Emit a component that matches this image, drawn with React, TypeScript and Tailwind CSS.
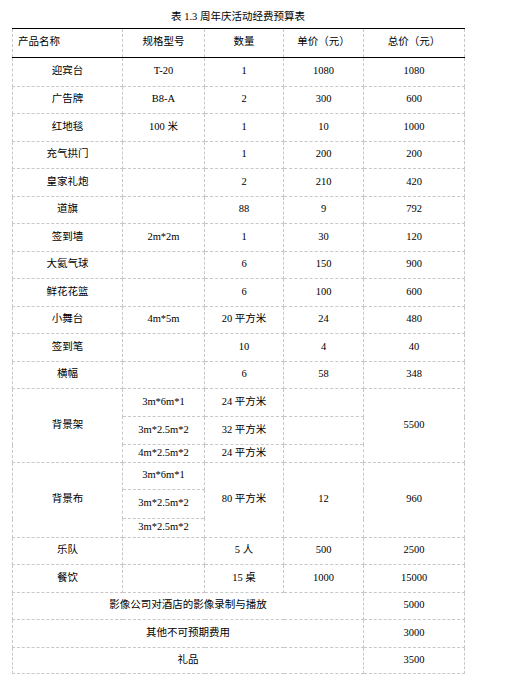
import React from "react";

type Cell = { t: string; rs?: number; cs?: number; left?: boolean };
type Row = { h: number; cells: Cell[] };

const rows: Row[] = [
  { h: 29, cells: [{ t: "迎宾台" }, { t: "T-20" }, { t: "1" }, { t: "1080" }, { t: "1080" }] },
  { h: 27, cells: [{ t: "广告牌" }, { t: "B8-A" }, { t: "2" }, { t: "300" }, { t: "600" }] },
  { h: 28, cells: [{ t: "红地毯" }, { t: "100 米" }, { t: "1" }, { t: "10" }, { t: "1000" }] },
  { h: 27, cells: [{ t: "充气拱门" }, { t: "" }, { t: "1" }, { t: "200" }, { t: "200" }] },
  { h: 28, cells: [{ t: "皇家礼炮" }, { t: "" }, { t: "2" }, { t: "210" }, { t: "420" }] },
  { h: 27, cells: [{ t: "道旗" }, { t: "" }, { t: "88" }, { t: "9" }, { t: "792" }] },
  { h: 28, cells: [{ t: "签到墙" }, { t: "2m*2m" }, { t: "1" }, { t: "30" }, { t: "120" }] },
  { h: 27, cells: [{ t: "大氦气球" }, { t: "" }, { t: "6" }, { t: "150" }, { t: "900" }] },
  { h: 28, cells: [{ t: "鲜花花篮" }, { t: "" }, { t: "6" }, { t: "100" }, { t: "600" }] },
  { h: 27, cells: [{ t: "小舞台" }, { t: "4m*5m" }, { t: "20 平方米" }, { t: "24" }, { t: "480" }] },
  { h: 28, cells: [{ t: "签到笔" }, { t: "" }, { t: "10" }, { t: "4" }, { t: "40" }] },
  { h: 27, cells: [{ t: "横幅" }, { t: "" }, { t: "6" }, { t: "58" }, { t: "348" }] },
  { h: 28, cells: [{ t: "背景架", rs: 3 }, { t: "3m*6m*1" }, { t: "24 平方米" }, { t: "" }, { t: "5500", rs: 3 }] },
  { h: 28, cells: [{ t: "3m*2.5m*2" }, { t: "32 平方米" }, { t: "" }] },
  { h: 18, cells: [{ t: "4m*2.5m*2" }, { t: "24 平方米" }, { t: "" }] },
  { h: 27, cells: [{ t: "背景布", rs: 3 }, { t: "3m*6m*1" }, { t: "80 平方米", rs: 3 }, { t: "12", rs: 3 }, { t: "960", rs: 3 }] },
  { h: 29, cells: [{ t: "3m*2.5m*2" }] },
  { h: 19, cells: [{ t: "3m*2.5m*2" }] },
  { h: 27, cells: [{ t: "乐队" }, { t: "" }, { t: "5 人" }, { t: "500" }, { t: "2500" }] },
  { h: 28, cells: [{ t: "餐饮" }, { t: "" }, { t: "15 桌" }, { t: "1000" }, { t: "15000" }] },
  { h: 27, cells: [{ t: "影像公司对酒店的影像录制与播放", cs: 4 }, { t: "5000" }] },
  { h: 28, cells: [{ t: "其他不可预期费用", cs: 4 }, { t: "3000" }] },
  { h: 26, cells: [{ t: "礼品", cs: 4 }, { t: "3500" }] },
];

const headers = ["产品名称", "规格型号", "数量", "单价（元）", "总价（元）"];

export default function App() {
  return (
    <div className="w-[513px] h-[686px] bg-white text-black font-['Liberation_Serif','Noto_Sans_CJK_SC',sans-serif] text-[10.5px] leading-[12px]">
      <div className="ml-[12px] w-[452px] h-[28px] flex items-end justify-center pb-[5px]">
        表 1.3 周年庆活动经费预算表
      </div>
      <table className="ml-[12px] w-[452px] border-collapse table-fixed">
        <colgroup>
          <col className="w-[110px]" />
          <col className="w-[82px]" />
          <col className="w-[79px]" />
          <col className="w-[80px]" />
          <col className="w-[101px]" />
        </colgroup>
        <thead>
          <tr className="border-y border-solid border-black">
            {headers.map((h, i) => (
              <th
                key={i}
                className={`h-[29px] p-0 font-normal border-x border-dashed border-x-[#c8c8c8] ${
                  i === 0 ? "text-left pl-[5px]" : "text-center"
                }`}
              >
                <span className="relative -top-[1px]">{h}</span>
              </th>
            ))}
          </tr>
        </thead>
        <tbody>
          {rows.map((r, ri) => (
            <tr key={ri}>
              {r.cells.map((c, ci) => (
                <td
                  key={ci}
                  rowSpan={c.rs}
                  colSpan={c.cs}
                  style={{ height: r.h }}
                  className="p-0 text-center align-middle border border-dashed border-[#c8c8c8] whitespace-nowrap"
                >
                  <span className="relative -top-[1px]">{c.t}</span>
                </td>
              ))}
            </tr>
          ))}
        </tbody>
      </table>
    </div>
  );
}
